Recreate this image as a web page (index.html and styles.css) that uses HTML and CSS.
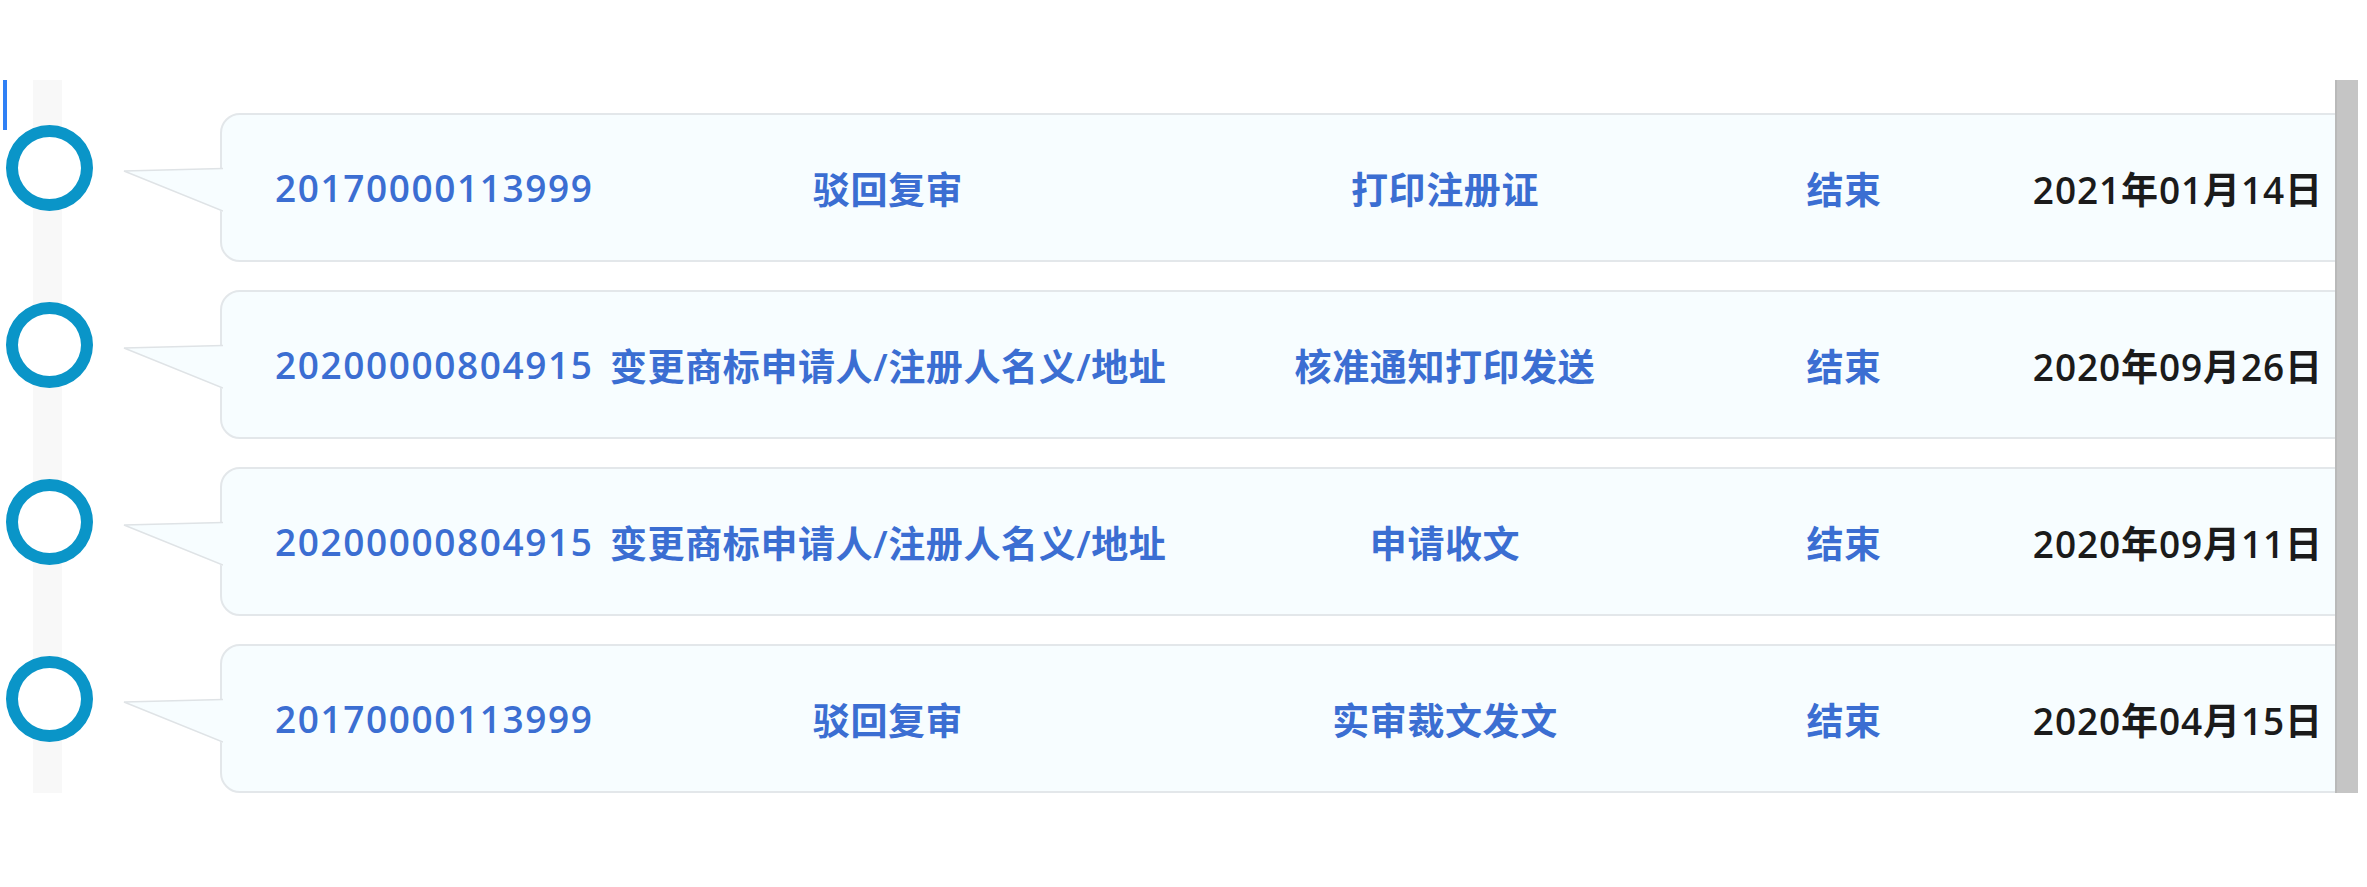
FILE: index.html
```html
<!DOCTYPE html>
<html lang="zh-CN">
<head>
<meta charset="utf-8">
<title>商标流程</title>
<link rel="stylesheet" href="styles.css">
</head>
<body>
<div class="viewport">
  <div class="content">
    <div class="caret"></div>
    <ul class="flow">
      <li class="item">
        <span class="node"></span>
        <div class="card">
          <svg class="tail" width="100" height="46" viewBox="0 0 100 46"><polygon points="1,4 100,1 100,45" fill="#f7fdff"/><polyline points="100,1.5 1,4 100,44" fill="none" stroke="#dfe3e6" stroke-width="1.5"/></svg>
          <span class="c1">20170000113999</span>
          <span class="c2">驳回复审</span>
          <span class="c3">打印注册证</span>
          <span class="c4">结束</span>
          <span class="c5">2021年01月14日</span>
        </div>
      </li>
      <li class="item">
        <span class="node"></span>
        <div class="card">
          <svg class="tail" width="100" height="46" viewBox="0 0 100 46"><polygon points="1,4 100,1 100,45" fill="#f7fdff"/><polyline points="100,1.5 1,4 100,44" fill="none" stroke="#dfe3e6" stroke-width="1.5"/></svg>
          <span class="c1">20200000804915</span>
          <span class="c2">变更商标申请人/注册人名义/地址</span>
          <span class="c3">核准通知打印发送</span>
          <span class="c4">结束</span>
          <span class="c5">2020年09月26日</span>
        </div>
      </li>
      <li class="item">
        <span class="node"></span>
        <div class="card">
          <svg class="tail" width="100" height="46" viewBox="0 0 100 46"><polygon points="1,4 100,1 100,45" fill="#f7fdff"/><polyline points="100,1.5 1,4 100,44" fill="none" stroke="#dfe3e6" stroke-width="1.5"/></svg>
          <span class="c1">20200000804915</span>
          <span class="c2">变更商标申请人/注册人名义/地址</span>
          <span class="c3">申请收文</span>
          <span class="c4">结束</span>
          <span class="c5">2020年09月11日</span>
        </div>
      </li>
      <li class="item">
        <span class="node"></span>
        <div class="card">
          <svg class="tail" width="100" height="46" viewBox="0 0 100 46"><polygon points="1,4 100,1 100,45" fill="#f7fdff"/><polyline points="100,1.5 1,4 100,44" fill="none" stroke="#dfe3e6" stroke-width="1.5"/></svg>
          <span class="c1">20170000113999</span>
          <span class="c2">驳回复审</span>
          <span class="c3">实审裁文发文</span>
          <span class="c4">结束</span>
          <span class="c5">2020年04月15日</span>
        </div>
      </li>
    </ul>
  </div>
  <div class="scrollbar"></div>
</div>
</body>
</html>
```

FILE: styles.css
```css
html, body {
  margin: 0;
  padding: 0;
  background: #ffffff;
}

body {
  font-family: "Open Sans", "Noto Sans CJK SC", sans-serif;
  width: 2367px;
  height: 887px;
  overflow: hidden;
}

.viewport {
  display: flex;
  margin-top: 80px;
  height: 713px;
}

.content {
  position: relative;
  width: 2335px;
  height: 713px;
  overflow: hidden;
  background: linear-gradient(to right, transparent 33px, #f8f8f8 33px, #f8f8f8 62px, transparent 62px);
}

.caret {
  position: absolute;
  left: 3px;
  top: 0;
  width: 4px;
  height: 50px;
  background: #2f80f5;
}

.scrollbar {
  width: 21px;
  height: 713px;
  background: #c5c5c5;
  border-left: 2px solid #b9b9b9;
}

.flow {
  list-style: none;
  margin: 0;
  padding: 33px 0 0 0;
  display: flex;
  flex-direction: column;
  gap: 28px;
}

.item {
  display: flex;
  align-items: flex-start;
  height: 149px;
}

.node {
  box-sizing: border-box;
  flex: none;
  width: 87px;
  height: 86px;
  margin: 12px 0 0 6px;
  border: 12px solid #0a95c8;
  border-radius: 50%;
  background: #ffffff;
}

.card {
  position: relative;
  flex: none;
  box-sizing: border-box;
  width: 2140px;
  height: 149px;
  margin-left: 127px;
  padding-left: 53px;
  border: 2px solid #e3e7ea;
  border-radius: 20px;
  background: #f7fdff;
  display: grid;
  grid-template-columns: 335px 556px 558px 240px 359px;
  align-items: center;
  font-size: 37px;
  font-weight: 600;
  letter-spacing: 0.6px;
  color: #3b6ed2;
  white-space: nowrap;
}

.tail {
  position: absolute;
  left: -99px;
  top: 52px;
}

.c1 {
  letter-spacing: 1.6px;
}

.c2, .c3, .c4 {
  text-align: center;
}

.c5 {
  text-align: right;
  letter-spacing: 0.9px;
  color: #1b1b1b;
}
```
